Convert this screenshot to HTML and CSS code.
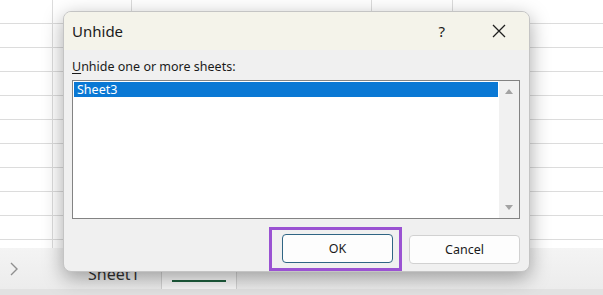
FILE: index.html
```html
<!DOCTYPE html>
<html lang="en">
<head>
    <meta charset="UTF-8">
    <title>Unhide</title>
    <link rel="stylesheet" href="styles.css">
</head>
<body>
    <div class="workbook">
        <div class="sheet">
            <div class="col col-a"></div>
            <div class="col col-b"></div>
            <div class="col col-c"></div>
            <div class="col col-d"></div>
            <div class="col col-e"></div>
        </div>
        <div class="tabbar">
            <svg class="chevron" width="10" height="14" viewBox="0 0 10 14">
                <polyline points="2,1 8,7 2,13" fill="none" stroke="#8f8f8f" stroke-width="1.4"/>
            </svg>
            <span class="tab-name">Sheet1</span>
            <div class="tab-active"><span class="tab-line"></span></div>
        </div>
        <div class="statusbar"></div>
    </div>

    <div class="dialog">
        <div class="titlebar">
            <span class="title">Unhide</span>
            <span class="help">?</span>
            <svg class="close" width="14" height="14" viewBox="0 0 14 14">
                <path d="M1 1 L13 13 M13 1 L1 13" stroke="#1f1f1f" stroke-width="1.3" fill="none"/>
            </svg>
        </div>
        <div class="dialog-body">
            <div class="label"><u>U</u>nhide one or more sheets:</div>
            <div class="listbox">
                <div class="items">
                    <div class="item selected">Sheet3</div>
                </div>
                <div class="scrollbar">
                    <span class="arrow up"></span>
                    <span class="arrow down"></span>
                </div>
            </div>
            <div class="buttons">
                <div class="highlight">
                    <button class="btn btn-default">OK</button>
                </div>
                <button class="btn">Cancel</button>
            </div>
        </div>
    </div>
</body>
</html>
```

FILE: styles.css
```css
body {
    margin: 0;
    width: 603px;
    height: 295px;
    overflow: hidden;
    background: #ffffff;
    font-family: "Noto Sans", "Open Sans", sans-serif;
    position: relative;
}

.workbook {
    display: flex;
    flex-direction: column;
    height: 295px;
}

.sheet {
    height: 248px;
    flex-shrink: 0;
    display: flex;
    background: repeating-linear-gradient(to bottom, transparent 0 23px, #dcdcdc 23px 24px);
}
.col {
    box-sizing: border-box;
    border-right: 1px solid #dcdcdc;
    height: 100%;
}
.col-a { width: 53px; }
.col-b { width: 79px; }
.col-c { width: 240px; }
.col-d { width: 81px; }
.col-e { flex: 1; border-right: none; }

.tabbar {
    height: 41px;
    flex-shrink: 0;
    display: flex;
    align-items: stretch;
    background: linear-gradient(to bottom, #f4f4f4, #ececec);
}
.chevron {
    margin: 14px 0 0 9px;
}
.tab-name {
    margin-left: 69px;
    font-size: 16px;
    line-height: 16px;
    padding-top: 18px;
    color: #333;
    width: 73px;
}
.tab-active {
    box-sizing: border-box;
    width: 76px;
    border-left: 1px solid #d2d2d2;
    border-right: 1px solid #d2d2d2;
    background: #f7f7f7;
    display: flex;
    justify-content: center;
    align-items: flex-end;
    padding-bottom: 7px;
}
.tab-line {
    width: 54px;
    height: 2px;
    background: #1d5e3d;
}
.statusbar {
    flex: 1;
    background: #e2e2e2;
}

/* dialog sits over the sheet */
.dialog {
    position: absolute;
    left: 63px;
    top: 11px;
    width: 467px;
    height: 261px;
    box-sizing: border-box;
    border: 1px solid #c4c4c4;
    border-radius: 8px;
    background: #f0f0f0;
    overflow: hidden;
    box-shadow: 0 6px 20px rgba(0, 0, 0, 0.35);
    display: flex;
    flex-direction: column;
}
.titlebar {
    height: 38px;
    flex-shrink: 0;
    background: #f4f3ea;
    display: flex;
    align-items: center;
    padding-left: 8px;
    color: #1a1a1a;
}
.title {
    font-size: 15px;
    flex: 1;
}
.help {
    font-size: 15px;
    margin-right: 47px;
}
.close {
    margin-right: 23px;
}

.dialog-body {
    flex: 1;
    display: flex;
    flex-direction: column;
    padding: 9px 9px 0 8px;
}
.label {
    font-size: 12.5px;
    line-height: 16px;
    color: #1a1a1a;
    margin-bottom: 5px;
}
.label u {
    text-decoration-thickness: 1px;
    text-underline-offset: 2px;
}
.listbox {
    height: 139px;
    flex-shrink: 0;
    box-sizing: border-box;
    border: 1px solid #838383;
    background: #ffffff;
    display: flex;
}
.items {
    flex: 1;
    padding: 1px 1px 0 1px;
}
.item {
    height: 15px;
    font-size: 12.5px;
    line-height: 15px;
    padding-left: 3px;
}
.selected {
    background: #0a78d4;
    color: #ffffff;
}
.scrollbar {
    width: 20px;
    background: #f1f1f1;
    display: flex;
    flex-direction: column;
    justify-content: space-between;
    align-items: center;
    padding: 8px 0 8px;
}
.arrow {
    width: 0;
    height: 0;
    border-left: 4px solid transparent;
    border-right: 4px solid transparent;
}
.arrow.up { border-bottom: 5px solid #a3a3a3; }
.arrow.down { border-top: 5px solid #a3a3a3; }

.buttons {
    display: flex;
    justify-content: flex-end;
    align-items: center;
    margin-top: 8px;
    gap: 7px;
}
.highlight {
    border: 3px solid #9a52d2;
    padding: 4px 6px 5px 10px;
    display: flex;
}
.btn {
    width: 111px;
    height: 29px;
    box-sizing: border-box;
    border: 1px solid #d1d1d1;
    border-radius: 4px;
    background: #fdfdfd;
    font-family: "Noto Sans", "Open Sans", sans-serif;
    font-size: 12.5px;
    color: #1a1a1a;
    padding: 0;
}
.btn-default {
    border-color: #2f6584;
}
```
